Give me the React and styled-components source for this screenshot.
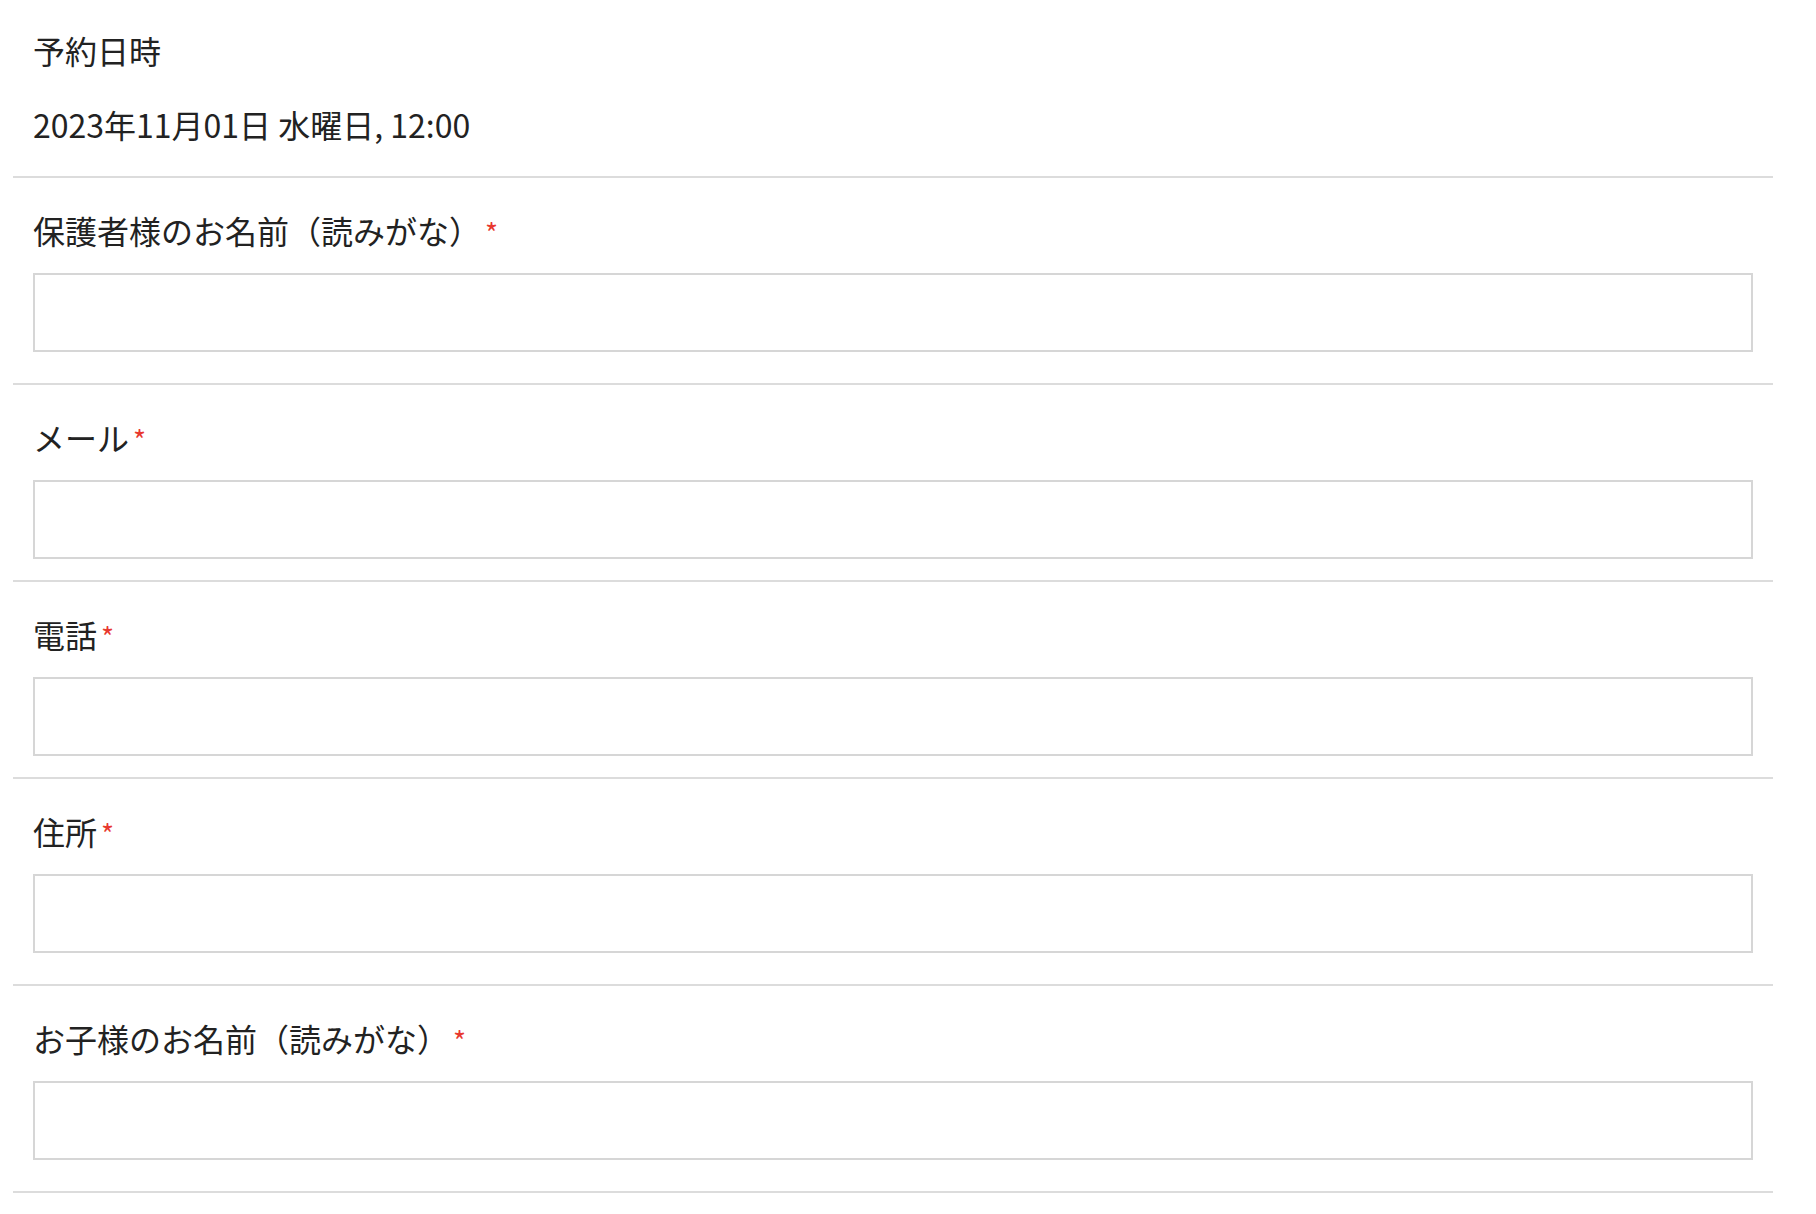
import React from "react";
import styled, { createGlobalStyle } from "styled-components";

const GlobalStyle = createGlobalStyle`
  html, body {
    margin: 0;
    padding: 0;
    background: #ffffff;
  }
  body {
    font-family: "Noto Sans CJK JP", "Noto Sans", sans-serif;
    color: #222222;
  }
  * { box-sizing: border-box; }
`;

const Page = styled.div`
  width: 1760px;
  margin-left: 13px;
  display: flex;
  flex-direction: column;
`;

const Header = styled.section`
  display: flex;
  flex-direction: column;
  gap: 26px;
  padding: 26px 20px 28px;
  border-bottom: 2px solid #dcdcdc;
`;

const Text = styled.div`
  font-size: 32px;
  line-height: 48px;
  height: 48px;
  color: #222222;
  white-space: nowrap;
`;

const Field = styled.section`
  display: flex;
  flex-direction: column;
  gap: 19px;
  padding: 28px 20px ${(p) => (p.$compact ? "21px" : "31px")};
  border-bottom: 2px solid #dcdcdc;
`;

const Label = styled.label`
  display: block;
  height: 48px;
  font-size: 32px;
  line-height: 48px;
  color: #222222;
  white-space: nowrap;
`;

const Required = styled.span`
  color: #e8382f;
  font-size: 28px;
  line-height: 1;
  margin-left: 4px;
  vertical-align: baseline;
`;

const Input = styled.input`
  display: block;
  width: 100%;
  height: 79px;
  margin: 0;
  border: 2px solid #d6d6d6;
  border-radius: 0;
  background: #ffffff;
  padding: 0 16px;
  font-family: inherit;
  font-size: 32px;
  color: #222222;
  outline: none;
`;

const fields = [
  { label: "保護者様のお名前（読みがな）", compact: false, type: "text" },
  { label: "メール", compact: true, type: "email" },
  { label: "電話", compact: true, type: "tel" },
  { label: "住所", compact: false, type: "text" },
  { label: "お子様のお名前（読みがな）", compact: false, type: "text" },
];

export default function App() {
  return (
    <>
      <GlobalStyle />
      <Page>
        <Header>
          <Text>予約日時</Text>
          <Text>2023年11月01日 水曜日, 12:00</Text>
        </Header>
        {fields.map((f) => (
          <Field key={f.label} $compact={f.compact}>
            <Label>
              {f.label}
              <Required>*</Required>
            </Label>
            <Input type={f.type} />
          </Field>
        ))}
      </Page>
    </>
  );
}
